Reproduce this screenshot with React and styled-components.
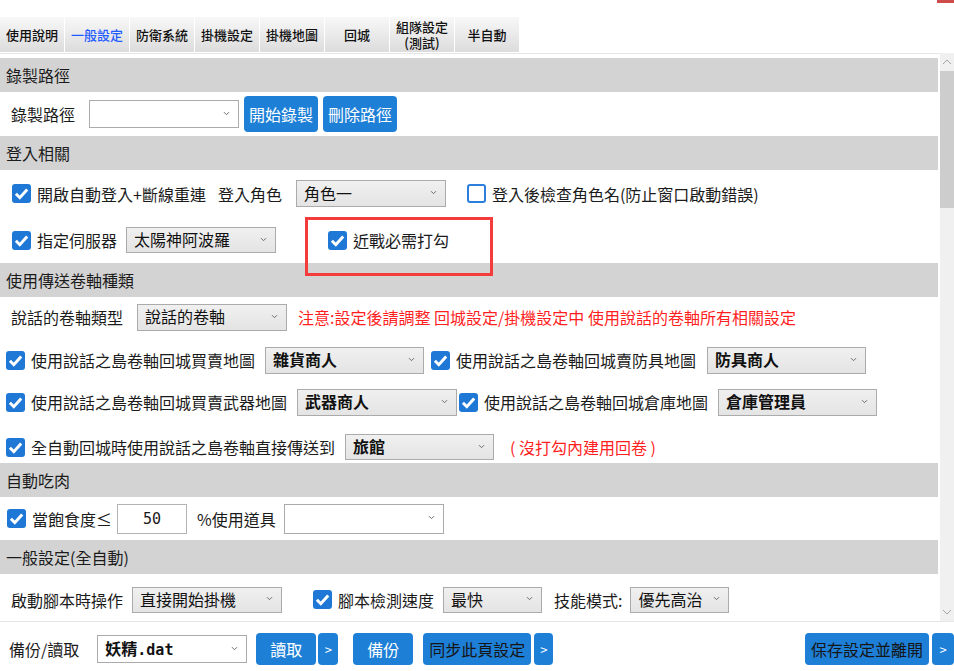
import React from "react";
import styled, { createGlobalStyle } from "styled-components";

const Global = createGlobalStyle`
  html, body { margin: 0; padding: 0; background: #fff; }
  body { font-family: "Noto Sans CJK TC", "Noto Sans", sans-serif; color: #1b1b1b; }
  * { box-sizing: border-box; }
`;

const Page = styled.div`
  width: 954px;
  height: 671px;
  display: flex;
  flex-direction: column;
  overflow: hidden;
  background: #fff;
`;

const TopStrip = styled.div`
  flex: none;
  height: 17px;
  position: relative;
`;

const CornerMark = styled.span`
  position: absolute;
  right: 0;
  top: 0;
  width: 17px;
  height: 3px;
  background: #cf4c4c;
`;

const TabBar = styled.nav`
  flex: none;
  height: 36px;
  display: flex;
  align-items: flex-start;
  gap: 1px;
`;

const Tab = styled.div`
  width: 64px;
  height: 35px;
  display: flex;
  flex-direction: column;
  align-items: center;
  justify-content: center;
  text-align: center;
  background: linear-gradient(#f8f8f8, #dcdcdc);
  font-size: 13px;
  line-height: 16px;
  font-weight: 500;
  color: ${(p) => (p.$active ? "#1f5cff" : "#111")};
`;

const TabLine = styled.span`
  display: block;
  height: 16px;
`;

const Body = styled.div`
  flex: none;
  height: 568px;
  display: flex;
`;

const Scroller = styled.div`
  flex: 1;
  border-top: 1px solid #e6e6e6;
  padding: 4px 2px 0 0;
  overflow: hidden;
`;

const ScrollBar = styled.div`
  width: 14px;
  flex: none;
  display: flex;
  flex-direction: column;
  background: #f0f0f0;
`;

const ScrollArrow = styled.div`
  height: 18px;
  display: flex;
  align-items: center;
  justify-content: center;
`;

const ScrollThumb = styled.div`
  height: 137px;
  background: #cdcdcd;
`;

const ScrollTrack = styled.div`
  flex: 1;
`;

const SectionHead = styled.div`
  height: 34px;
  background: #d3d3d3;
  padding-left: 6px;
  display: flex;
  align-items: center;
  font-size: 16px;
`;

const Row = styled.div`
  height: ${(p) => p.$h}px;
  padding-left: ${(p) => p.$pl ?? 11}px;
  padding-top: ${(p) => p.$pt || 0}px;
  display: flex;
  align-items: center;
  font-size: 16px;
  line-height: 20px;
  white-space: nowrap;
`;

const Text = styled.span`
  margin-left: ${(p) => p.$ml || 0}px;
  flex: none;
`;

const Warn = styled.span`
  margin-left: ${(p) => p.$ml || 0}px;
  color: #ff1f1f;
  flex: none;
`;

const CheckWrap = styled.label`
  position: relative;
  display: inline-flex;
  align-items: center;
  gap: 6px;
  height: 20px;
  flex: none;
  margin-left: ${(p) => p.$ml || 0}px;
`;

const Box = styled.span`
  width: 19px;
  height: 19px;
  flex: none;
  border-radius: 3px;
  display: inline-flex;
  align-items: center;
  justify-content: center;
  background: ${(p) => (p.$on ? "#1f78d6" : "#fff")};
  border: ${(p) => (p.$on ? "none" : "2px solid #2c7fdc")};
`;

const Frame = styled.span`
  position: absolute;
  left: -23px;
  top: -13px;
  width: 188px;
  height: 59px;
  border: 3px solid #f43c3c;
  pointer-events: none;
  z-index: 2;
`;

const Dropdown = styled.div`
  flex: none;
  width: ${(p) => p.$w}px;
  height: ${(p) => p.$h || 27}px;
  margin-left: ${(p) => p.$ml || 0}px;
  border: 1px solid #ababab;
  background: ${(p) => (p.$plain ? "#fff" : "linear-gradient(#f0f0f0, #e4e4e4)")};
  display: flex;
  align-items: center;
  justify-content: space-between;
  padding: 0 8px 2px 7px;
  font-size: 16px;
  font-weight: ${(p) => (p.$bold ? 700 : 400)};
  color: #111;
`;

const Mono = styled.span`
  font-family: "DejaVu Sans Mono", "Liberation Mono", monospace;
  font-size: ${(p) => p.$size || 15}px;
`;

const NumberField = styled.div`
  flex: none;
  width: 70px;
  height: 30px;
  margin-left: ${(p) => p.$ml || 0}px;
  border: 1px solid #b3b3b3;
  background: #fff;
  display: flex;
  align-items: center;
  justify-content: center;
`;

const Btn = styled.button`
  flex: none;
  width: ${(p) => p.$w}px;
  height: ${(p) => p.$h || 36}px;
  margin-left: ${(p) => p.$ml || 0}px;
  border: none;
  border-radius: 4px;
  background: #1e7fd7;
  color: ${(p) => (p.$dark ? "#151515" : "#fff")};
  font-family: inherit;
  font-size: ${(p) => p.$fs || 16}px;
  padding: 0;
  display: flex;
  align-items: center;
  justify-content: center;
`;

const Footer = styled.footer`
  flex: none;
  height: 50px;
  border-top: 1px solid #e6e6e6;
  padding: 5px 0 0 9px;
  display: flex;
  align-items: center;
  font-size: 16px;
  white-space: nowrap;
`;

const Spacer = styled.div`
  flex: 1;
`;

const Chevron = () => (
  <svg width="7" height="5" viewBox="0 0 7 5">
    <path d="M1 1.2 L3.5 3.7 L6 1.2" fill="none" stroke="#6b6b6b" strokeWidth="1" />
  </svg>
);

const Select = ({ children, ...rest }) => (
  <Dropdown {...rest}>
    <span>{children}</span>
    <Chevron />
  </Dropdown>
);

const Tick = () => (
  <svg width="19" height="19" viewBox="0 0 19 19">
    <path d="M3.9 9.8 L7.8 13.7 L15.2 5.6" fill="none" stroke="#fff" strokeWidth="3" />
  </svg>
);

const Check = ({ on, framed, children, ...rest }) => (
  <CheckWrap {...rest}>
    <Box $on={on}>{on && <Tick />}</Box>
    <span>{children}</span>
    {framed && <Frame />}
  </CheckWrap>
);

const ScrollChevron = ({ up }) => (
  <svg width="10" height="6" viewBox="0 0 10 6">
    <path
      d={up ? "M1 5 L5 1 L9 5" : "M1 1 L5 5 L9 1"}
      fill="none"
      stroke="#a3a3a3"
      strokeWidth="1"
    />
  </svg>
);

const tabs = ["使用說明", "一般設定", "防衛系統", "掛機設定", "掛機地圖", "回城"];

export default function App() {
  return (
    <>
      <Global />
      <Page>
        <TopStrip>
          <CornerMark />
        </TopStrip>
        <TabBar>
          {tabs.map((t) => (
            <Tab key={t} $active={t === "一般設定"}>
              {t}
            </Tab>
          ))}
          <Tab>
            <TabLine>組隊設定</TabLine>
            <TabLine>(測試)</TabLine>
          </Tab>
          <Tab>半自動</Tab>
        </TabBar>

        <Body>
          <Scroller>
            <SectionHead>錄製路徑</SectionHead>
            <Row $h={44}>
              <Text>錄製路徑</Text>
              <Select $w={150} $h={28} $ml={14} $plain />
              <Btn $w={74} $ml={5}>開始錄製</Btn>
              <Btn $w={74} $ml={5}>刪除路徑</Btn>
            </Row>

            <SectionHead>登入相關</SectionHead>
            <Row $h={47} $pl={12}>
              <Check on>開啟自動登入+斷線重連</Check>
              <Text $ml={12}>登入角色</Text>
              <Select $w={150} $ml={14}>角色一</Select>
              <Check $ml={21}>登入後檢查角色名(防止窗口啟動錯誤)</Check>
            </Row>
            <Row $h={46} $pl={12}>
              <Check on>指定伺服器</Check>
              <Select $w={150} $h={26} $ml={9}>太陽神阿波羅</Select>
              <Check on framed $ml={52}>近戰必需打勾</Check>
            </Row>

            <SectionHead>使用傳送卷軸種類</SectionHead>
            <Row $h={40}>
              <Text>說話的卷軸類型</Text>
              <Select $w={150} $ml={14}>說話的卷軸</Select>
              <Warn $ml={11}>注意:設定後請調整 回城設定/掛機設定中 使用說話的卷軸所有相關設定</Warn>
            </Row>
            <Row $h={44} $pl={6} $pt={2}>
              <Check on>使用說話之島卷軸回城買賣地圖</Check>
              <Select $w={159} $ml={10} $bold>雜貨商人</Select>
              <Check on $ml={7}>使用說話之島卷軸回城賣防具地圖</Check>
              <Select $w={159} $ml={11} $bold>防具商人</Select>
            </Row>
            <Row $h={42} $pl={6}>
              <Check on>使用說話之島卷軸回城買賣武器地圖</Check>
              <Select $w={160} $ml={10} $bold>武器商人</Select>
              <Check on $ml={2}>使用說話之島卷軸回城倉庫地圖</Check>
              <Select $w={159} $ml={10} $bold>倉庫管理員</Select>
            </Row>
            <Row $h={40} $pl={6} $pt={8}>
              <Check on>全自動回城時使用說話之島卷軸直接傳送到</Check>
              <Select $w={149} $h={26} $ml={10} $bold>旅館</Select>
              <Warn $ml={16}>( 沒打勾內建用回卷 )</Warn>
            </Row>

            <SectionHead>自動吃肉</SectionHead>
            <Row $h={43} $pl={7}>
              <Check on>當飽食度≤</Check>
              <NumberField $ml={5}>
                <Mono $size={15}>50</Mono>
              </NumberField>
              <Text $ml={10}>%使用道具</Text>
              <Select $w={160} $h={30} $ml={8} $plain />
            </Row>

            <SectionHead>一般設定(全自動)</SectionHead>
            <Row $h={51}>
              <Text>啟動腳本時操作</Text>
              <Select $w={150} $h={26} $ml={9}>直接開始掛機</Select>
              <Check on $ml={31}>腳本檢測速度</Check>
              <Select $w={99} $h={26} $ml={9}>最快</Select>
              <Text $ml={12}>技能模式:</Text>
              <Select $w={99} $h={26} $ml={8}>優先高治</Select>
            </Row>
          </Scroller>

          <ScrollBar>
            <ScrollArrow>
              <ScrollChevron up />
            </ScrollArrow>
            <ScrollThumb />
            <ScrollTrack />
            <ScrollArrow>
              <ScrollChevron />
            </ScrollArrow>
          </ScrollBar>
        </Body>

        <Footer>
          <Text>備份/讀取</Text>
          <Select $w={150} $h={28} $ml={18} $plain $bold>
            妖精<Mono $size={15}>.dat</Mono>
          </Select>
          <Btn $w={60} $h={32} $ml={9}>讀取</Btn>
          <Btn $w={20} $h={32} $ml={2} $fs={13}>&gt;</Btn>
          <Btn $w={60} $h={32} $ml={15}>備份</Btn>
          <Btn $w={108} $h={32} $ml={10} $dark>同步此頁設定</Btn>
          <Btn $w={19} $h={32} $ml={3} $fs={13}>&gt;</Btn>
          <Spacer />
          <Btn $w={124} $h={32} $dark>保存設定並離開</Btn>
          <Btn $w={22} $h={32} $ml={3} $fs={13}>&gt;</Btn>
        </Footer>
      </Page>
    </>
  );
}
